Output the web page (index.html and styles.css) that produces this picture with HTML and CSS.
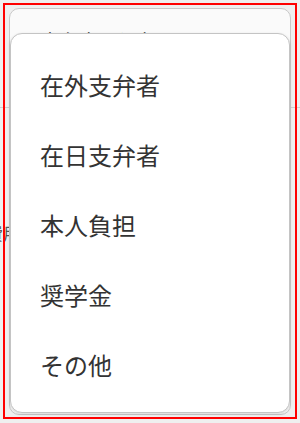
FILE: index.html
```html
<!DOCTYPE html>
<html lang="ja">
<head>
    <meta charset="UTF-8">
    <meta name="viewport" content="width=device-width, initial-scale=1.0">
    <title>支弁者の選択</title>
    <link rel="stylesheet" href="styles.css">
</head>
<body>
    <div class="screen">
        <div class="form">
            <div class="form-row"></div>
            <div class="form-row form-row-label">
                <span class="label">費用</span>
            </div>
        </div>

        <div class="sheet">
            <div class="sheet-title">支弁者を選択してください</div>
        </div>

        <ul class="menu">
            <li class="menu-item">在外支弁者</li>
            <li class="menu-item">在日支弁者</li>
            <li class="menu-item">本人負担</li>
            <li class="menu-item">奨学金</li>
            <li class="menu-item">その他</li>
        </ul>

        <div class="focus-ring"></div>
    </div>
</body>
</html>
```

FILE: styles.css
```css
body {
    margin: 0;
    background-color: #efefef;
    font-family: "Noto Sans CJK JP", "Noto Sans", sans-serif;
    color: #333;
}
.screen {
    position: relative;
    width: 300px;
    height: 423px;
    overflow: hidden;
}
.form-row {
    height: 107px;
    border-bottom: 1px solid #cfcfcf;
}
.form-row-label {
    border-bottom: none;
    padding-top: 113px;
    height: auto;
}
.label {
    display: inline-block;
    margin-left: -14px;
    font-size: 17px;
    line-height: 1;
    color: #555;
}
.sheet {
    position: absolute;
    top: 8px;
    left: 9px;
    right: 9px;
    bottom: 8px;
    overflow: hidden;
    background-color: #fafafa;
    border: 1px solid #c9c9c9;
    border-radius: 10px;
}
.sheet-title {
    padding: 23px 0 0 30px;
    font-size: 20px;
    line-height: 1;
    white-space: nowrap;
    color: #222;
}
.menu {
    position: absolute;
    top: 33px;
    left: 10px;
    right: 10px;
    bottom: 10px;
    margin: 0;
    padding: 15px 0 0;
    list-style: none;
    background-color: #fff;
    border: 1px solid #c4c4c4;
    border-radius: 12px;
    box-shadow: 0 1px 3px rgba(0, 0, 0, 0.15);
    box-sizing: border-box;
}
.menu-item {
    height: 70px;
    padding-left: 29px;
    display: flex;
    align-items: center;
    font-size: 24px;
    color: #333;
}
.focus-ring {
    position: absolute;
    top: 3px;
    left: 3px;
    right: 3px;
    bottom: 4px;
    border: 2px solid #ff0000;
    pointer-events: none;
}
```
